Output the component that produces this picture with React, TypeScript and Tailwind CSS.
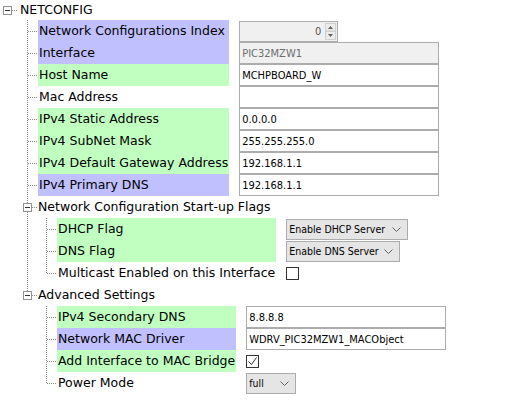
import React, { Fragment } from "react";

type Line = { x: number; half?: boolean };

const DOT = "#8a8a8a";
const PURPLE = "bg-[#c0c0ff]";
const GREEN = "bg-[#c0ffc0]";

const Gutter = ({
  width,
  height = 22,
  lines = [],
  stub,
  box,
}: {
  width: number;
  height?: number;
  lines?: Line[];
  stub?: [number, number];
  box?: number;
}) => {
  const cy = Math.floor(height / 2);
  return (
    <svg width={width} height={height} className="block shrink-0">
      {lines.map((l, i) => (
        <line
          key={i}
          x1={l.x + 0.5}
          x2={l.x + 0.5}
          y1={0}
          y2={l.half ? cy + 1 : height}
          stroke={DOT}
          strokeDasharray="1 1"
        />
      ))}
      {stub && (
        <line x1={stub[0]} x2={stub[1]} y1={cy + 0.5} y2={cy + 0.5} stroke={DOT} strokeDasharray="1 1" />
      )}
      {box !== undefined && (
        <g>
          <rect x={box - 4 + 0.5} y={cy - 4 + 0.5} width={8} height={8} fill="white" stroke="#919191" />
          <line x1={box - 2} x2={box + 3} y1={cy + 0.5} y2={cy + 0.5} stroke="#333" />
        </g>
      )}
    </svg>
  );
};

const Chevron = () => (
  <svg width="9" height="5" className="shrink-0">
    <polyline points="0.5,0.5 4.5,4.5 8.5,0.5" fill="none" stroke="#606060" />
  </svg>
);

const TextField = ({ value, disabled }: { value: string; disabled?: boolean }) => (
  <div
    className={`h-[22px] w-[200px] border border-[#acacac] flex items-center pl-[2px] whitespace-nowrap ${
      disabled ? "bg-[#f0f0f0] text-[#6d6d6d]" : "bg-white text-black"
    }`}>
    {value}
  </div>
);

const Spinner = ({ value }: { value: string }) => (
  <div className="mt-px h-[21px] w-[99px] border border-[#acacac] bg-[#f0f0f0] flex items-center justify-end">
    <span className="text-[#555] pr-[4px]">{value}</span>
    <svg width="11" height="17" className="mr-[1px] shrink-0">
      <rect x="0.5" y="0.5" width="10" height="7.5" fill="#ececec" stroke="#d0d0d0" />
      <rect x="0.5" y="8.5" width="10" height="8" fill="#ececec" stroke="#d0d0d0" />
      <polygon points="3,6 8,6 5.5,3" fill="#606060" />
      <polygon points="3,11 8,11 5.5,14" fill="#606060" />
    </svg>
  </div>
);

const Combo = ({ value, width }: { value: string; width: string }) => (
  <div
    className={`mt-px h-[21px] ${width} border border-[#acacac] bg-[#e5e5e5] flex items-center justify-between pl-[2px] pr-[6px] whitespace-nowrap text-black text-[10.5px]`}>
    <span>{value}</span>
    <Chevron />
  </div>
);

const Check = ({ checked }: { checked?: boolean }) => (
  <div className="mt-[5px] w-[13px] h-[13px] border border-[#333] bg-white flex items-center justify-center">
    {checked && (
      <svg width="11" height="11">
        <polyline points="1.5,5.5 4.5,8.5 9.5,1.5" fill="none" stroke="#333" />
      </svg>
    )}
  </div>
);

type Row = {
  label: string;
  bg?: string;
  control: React.ReactNode;
  lines: Line[];
};

const FieldGroup = ({ cols, rows, stub }: { cols: string; rows: Row[]; stub: [number, number] }) => (
  <div className={`grid ${cols} auto-rows-[22px]`}>
    {rows.map(r => (
      <Fragment key={r.label}>
        <Gutter width={stub[1]} lines={r.lines} stub={stub} />
        <div className={`flex items-center pl-[1px] pr-[1px] whitespace-nowrap ${r.bg ?? ""}`}>{r.label}</div>
        <div className="pl-[10px] flex items-start font-['DejaVu_Sans_Condensed','DejaVu_Sans',sans-serif] [font-stretch:condensed] text-[11px]">
          {r.control}
        </div>
      </Fragment>
    ))}
  </div>
);

const GroupHeader = ({ label, last }: { label: string; last?: boolean }) => (
  <div className="flex h-[22px] items-center">
    <Gutter width={38} lines={[{ x: 27, half: last }]} box={27} stub={[32, 38]} />
    <span className="whitespace-nowrap">{label}</span>
  </div>
);

const L1: Line[] = [{ x: 27 }];

const networkRows: Row[] = [
  { label: "Network Configurations Index", bg: PURPLE, control: <Spinner value="0" />, lines: L1 },
  { label: "Interface", bg: PURPLE, control: <TextField value="PIC32MZW1" disabled />, lines: L1 },
  { label: "Host Name", bg: GREEN, control: <TextField value="MCHPBOARD_W" />, lines: L1 },
  { label: "Mac Address", control: <TextField value="" />, lines: L1 },
  { label: "IPv4 Static Address", bg: GREEN, control: <TextField value="0.0.0.0" />, lines: L1 },
  { label: "IPv4 SubNet Mask", bg: GREEN, control: <TextField value="255.255.255.0" />, lines: L1 },
  { label: "IPv4 Default Gateway Address", bg: GREEN, control: <TextField value="192.168.1.1" />, lines: L1 },
  { label: "IPv4 Primary DNS", bg: PURPLE, control: <TextField value="192.168.1.1" />, lines: L1 },
];

const flagRows: Row[] = [
  { label: "DHCP Flag", bg: GREEN, control: <Combo value="Enable DHCP Server" width="w-[122px]" />, lines: [{ x: 27 }, { x: 46 }] },
  { label: "DNS Flag", bg: GREEN, control: <Combo value="Enable DNS Server" width="w-[114px]" />, lines: [{ x: 27 }, { x: 46 }] },
  { label: "Multicast Enabled on this Interface", control: <Check />, lines: [{ x: 27 }, { x: 46, half: true }] },
];

const advancedRows: Row[] = [
  { label: "IPv4 Secondary DNS", bg: GREEN, control: <TextField value="8.8.8.8" />, lines: [{ x: 46 }] },
  { label: "Network MAC Driver", bg: PURPLE, control: <TextField value="WDRV_PIC32MZW1_MACObject" />, lines: [{ x: 46 }] },
  { label: "Add Interface to MAC Bridge", bg: GREEN, control: <Check checked />, lines: [{ x: 46 }] },
  { label: "Power Mode", control: <Combo value="full" width="w-[50px]" />, lines: [{ x: 46, half: true }] },
];

export default function App() {
  return (
    <div className="w-[507px] h-[417px] bg-white text-black font-['DejaVu_Sans',sans-serif] text-[12.5px] leading-none overflow-hidden">
      <div className="flex h-[20px] items-center">
        <Gutter width={20} height={20} box={7} stub={[12, 18]} />
        <span>NETCONFIG</span>
      </div>
      <FieldGroup cols="grid-cols-[38px_auto_1fr]" rows={networkRows} stub={[28, 38]} />
      <GroupHeader label="Network Configuration Start-up Flags" />
      <FieldGroup cols="grid-cols-[57px_auto_1fr]" rows={flagRows} stub={[47, 57]} />
      <GroupHeader label="Advanced Settings" last />
      <FieldGroup cols="grid-cols-[57px_auto_1fr]" rows={advancedRows} stub={[47, 57]} />
    </div>
  );
}
